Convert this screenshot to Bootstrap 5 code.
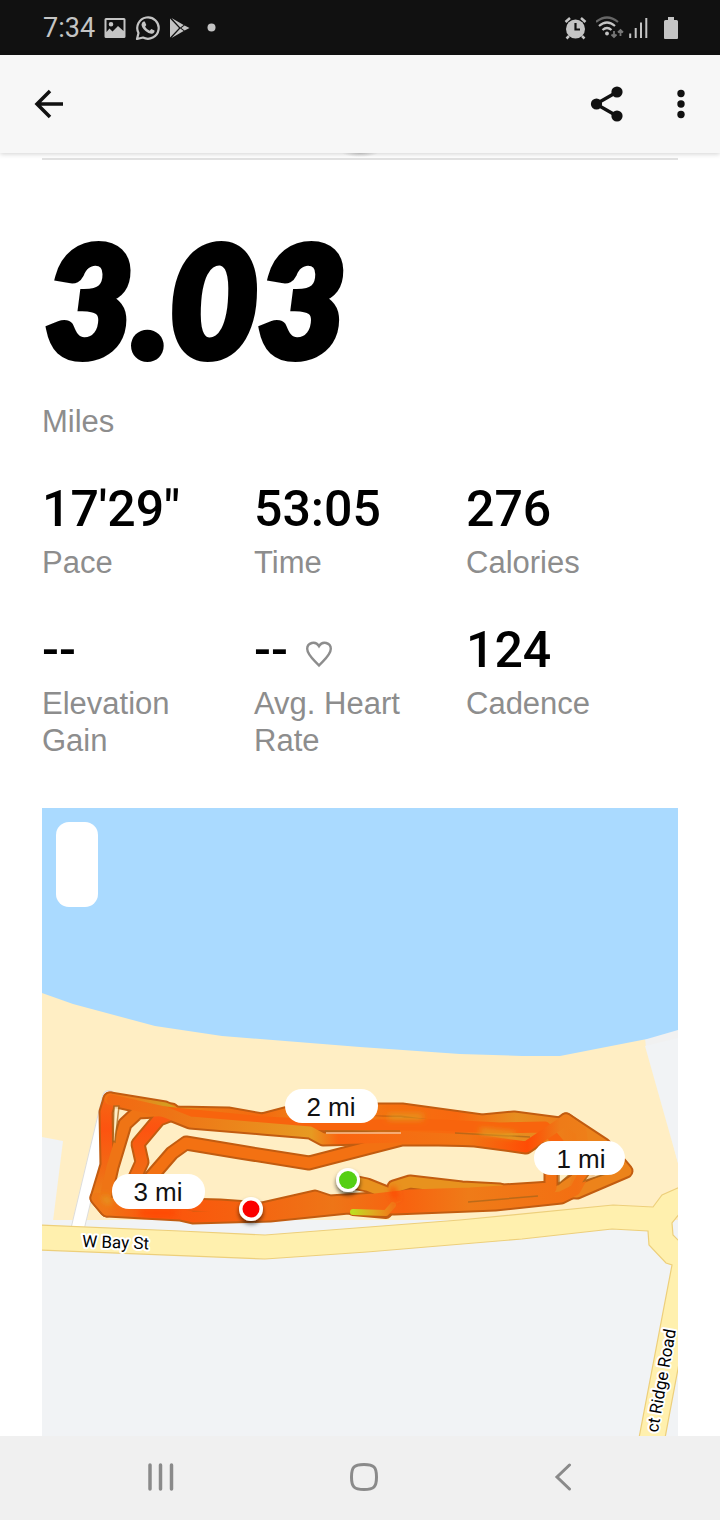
<!DOCTYPE html>
<html lang="en">
<head>
<meta charset="utf-8">
<meta name="viewport" content="width=device-width, initial-scale=1">
<title>Run details</title>
<link href="https://cdn.jsdelivr.net/npm/bootstrap@5.3.0/dist/css/bootstrap.min.css" rel="stylesheet">
<style>
  body { font-family: "Liberation Sans", Arial, sans-serif; background: #fff; color: #000; }
  svg { display: block; flex: none; }
  .status-strip { height: 55px; padding: 0 42px 0 43px; background: #111; color: #c4c4c4; font: 400 27px/32px Roboto, sans-serif; }
  .status-left { gap: 9px; }
  .app-bar { height: 98px; padding: 0 26px; background: #f7f7f7; box-shadow: 0 1px 5px rgba(0,0,0,.18); z-index: 2; }
  .app-actions { gap: 36px; }
  .icon-btn { padding: 8px; border: 0; background: none; color: #111; fill: #111; }
  .gutter { padding-left: 42px; padding-right: 42px; }
  .peek { height: 7px; border-bottom: 2px solid #e1e1e1; background: radial-gradient(18px 4px at 50% 0, #ccc, transparent); }
  .distance { margin: 58px 0 0; padding-left: 3px; font: italic 900 152px/160px Lato, sans-serif; -webkit-text-stroke: 8px #000; }
  .stat-label { margin: 0; color: #8d8d8d; font-size: 31px; line-height: 37px; font-weight: 400; }
  .distance-label { margin-top: 25px; }
  .stats { display: grid; grid-template-columns: repeat(3, 1fr); row-gap: 39px; margin-top: 39px; }
  .stat-value { margin: 0; height: 60px; font: 500 50px/60px Roboto, sans-serif; gap: 17px; }
  .stats .stat-label { margin-top: 5px; }
  .narrow { max-width: 170px; }
  .route-map { margin-top: 49px; }
  .route-map svg { width: 100%; height: auto; }
  .pill { font: 400 26px "Liberation Sans", Arial, sans-serif; fill: #111; }
  .road { font: 400 17px Roboto, sans-serif; fill: #000; stroke: #fff; stroke-width: 4px; stroke-linejoin: round; paint-order: stroke; }
  .system-nav { height: 84px; background: #f0f0f0; padding: 0 60px 2px; }
  .system-nav .icon-btn { color: #8a8a8a; }
</style>
</head>
<body>
<div class="d-flex flex-column min-vh-100">

  <div class="status-strip d-flex align-items-center justify-content-between">
    <div class="status-left d-flex align-items-center">
      <span>7:34</span>
      <svg width="22" height="22" viewBox="0 0 22 22"><path fill="currentColor" fill-rule="evenodd" d="M2 1h18q1.500 0 1.500 1.500v17q0 1.500-1.500 1.500H2Q.5 21 .5 19.500v-17Q.5 1 2 1zm.5 2v12l3-3.500 3 3 5.500-5.500 5.500 5V3zM7 5a2.300 2.300 0 1 1 0 4.600A2.300 2.300 0 0 1 7 5z"/></svg>
      <svg width="25" height="26" viewBox="0 0 25 26"><path fill="none" stroke="currentColor" stroke-width="2.200" stroke-linejoin="round" d="M2 24l1.500-6A10.700 10.700 0 1 1 8 22.500z"/><path fill="currentColor" d="M8.500 6.500h1.300l1.500 3.500-1.200 1.700q1.700 2.900 4.600 4l1.600-1.800 3.200 1.600q.3 2.500-2.300 3.200-3 .6-6.700-2.600Q6.300 12 6.500 9.200 7 7.200 8.500 6.500z"/></svg>
      <svg width="21" height="22" viewBox="0 0 21 22"><path fill="currentColor" d="M1 1.500l9 9.500-9 9.500zM2.500 1L14.700 8l-3.400 2.600zM2.500 21L14.700 14l-3.400-2.600zM12.300 11l3.300-2.500L20.500 11l-4.900 2.500z"/></svg>
      <svg class="ms-2" width="9" height="9" viewBox="0 0 9 9"><circle cx="4.500" cy="4.500" r="4" fill="currentColor"/></svg>
    </div>
    <div class="d-flex align-items-center">
      <svg width="24" height="24" viewBox="0 0 24 24"><circle cx="11.500" cy="13" r="9.500" fill="currentColor"/><path d="M1.500 6l4.500-4M21.500 6L17 2M5 20l-2.500 2.500M18 20l2.500 2.500" stroke="currentColor" stroke-width="2.500"/><path d="M11.500 7v6.500h4.500" fill="none" stroke="#111" stroke-width="2.200"/></svg>
      <svg class="ms-2" width="29" height="24" viewBox="0 0 29 24"><g fill="none" stroke="currentColor" stroke-width="2.200"><path stroke="#666" d="M0 6q11-9 22 0"/><path d="M3 10q8-7 16 0M6.500 14q4.500-4 9 0"/></g><circle cx="11" cy="17.500" r="1.900" fill="currentColor"/><path fill="none" stroke="#777" stroke-width="1.800" d="M18 15v6m-2.500-2.500L18 21l2.500-2.500M24.500 20v-6M22 16.500l2.500-2.500 2.500 2.500"/></svg>
      <svg class="ms-1" width="19" height="22" viewBox="0 0 19 22"><path d="M1.200 16.500v4.500M6.700 11v10M12 5.500V21M17.300 1v20" stroke="currentColor" stroke-width="2"/></svg>
      <svg class="ms-3" width="14" height="24" viewBox="0 0 14 24"><path fill="currentColor" d="M4 1h6v3h2.500Q14 4 14 5.500V22q0 1-1 1H1q-1 0-1-1V5.500Q0 4 1.500 4H4z"/></svg>
    </div>
  </div>

  <header class="app-bar position-relative d-flex align-items-center justify-content-between">
    <button class="icon-btn" type="button" aria-label="Back"><svg width="30" height="30" viewBox="0 0 30 30"><path d="M16 2L3 15l13 13M3 15h26" fill="none" stroke="currentColor" stroke-width="3.500"/></svg></button>
    <div class="app-actions d-flex">
      <button class="icon-btn" type="button" aria-label="Share"><svg width="34" height="36" viewBox="0 0 34 36"><path d="M27 6L6 18l21 12" fill="none" stroke="currentColor" stroke-width="3.400"/><circle cx="27" cy="6" r="5.600"/><circle cx="6.500" cy="18" r="5.600"/><circle cx="27" cy="30" r="5.600"/></svg></button>
      <button class="icon-btn" type="button" aria-label="More options"><svg width="10" height="36" viewBox="0 0 10 36"><circle cx="5" cy="7.500" r="3.700"/><circle cx="5" cy="18" r="3.700"/><circle cx="5" cy="28.500" r="3.700"/></svg></button>
    </div>
  </header>

  <main class="gutter flex-grow-1">
    <div class="peek"></div>
    <h1 class="distance">3.03</h1>
    <p class="stat-label distance-label">Miles</p>

    <section class="stats">
      <div><p class="stat-value">17'29"</p><p class="stat-label">Pace</p></div>
      <div><p class="stat-value">53:05</p><p class="stat-label">Time</p></div>
      <div><p class="stat-value">276</p><p class="stat-label">Calories</p></div>
      <div><p class="stat-value">--</p><p class="stat-label narrow">Elevation Gain</p></div>
      <div><p class="stat-value d-flex align-items-center">--<svg width="28" height="28" viewBox="0 0 28 28" class="mt-2"><path d="M14 25.500C9 20 2.200 15 2.200 8.800c0-6 8.300-8.500 11.800-2.600 3.500-5.900 11.800-3.400 11.800 2.600C25.800 15 19 20 14 25.500z" fill="none" stroke="#8d8d8d" stroke-width="2.400"/></svg></p><p class="stat-label narrow">Avg. Heart Rate</p></div>
      <div><p class="stat-value">124</p><p class="stat-label">Cadence</p></div>
    </section>

    <section class="route-map">
      <svg viewBox="42 808 636 628" role="img" aria-label="Route map">
        <defs>
          <linearGradient id="heatA" gradientUnits="userSpaceOnUse" x1="90" y1="0" x2="630" y2="0">
            <stop offset="0" stop-color="#f76a0b"/><stop offset=".08" stop-color="#ed7f1b"/><stop offset=".15" stop-color="#d2a020"/><stop offset=".21" stop-color="#ee7915"/><stop offset=".32" stop-color="#f5690e"/><stop offset=".44" stop-color="#e6921f"/><stop offset=".55" stop-color="#f5700f"/><stop offset=".68" stop-color="#f8680f"/><stop offset=".79" stop-color="#e68e20"/><stop offset=".88" stop-color="#ee7c18"/><stop offset="1" stop-color="#f57510"/>
          </linearGradient>
          <linearGradient id="heatB" gradientUnits="userSpaceOnUse" x1="90" y1="0" x2="630" y2="0">
            <stop offset="0" stop-color="#f46610"/><stop offset=".15" stop-color="#ee7416"/><stop offset=".3" stop-color="#eb8a1c"/><stop offset=".41" stop-color="#e69a22"/><stop offset=".46" stop-color="#f96510"/><stop offset=".7" stop-color="#f17614"/><stop offset=".81" stop-color="#ff4c05"/><stop offset=".87" stop-color="#ee7b18"/><stop offset="1" stop-color="#ee841a"/>
          </linearGradient>
          <linearGradient id="heatC" gradientUnits="userSpaceOnUse" x1="90" y1="0" x2="630" y2="0">
            <stop offset="0" stop-color="#ee7817"/><stop offset=".03" stop-color="#f07617"/><stop offset=".12" stop-color="#fd520a"/><stop offset=".28" stop-color="#f56210"/><stop offset=".45" stop-color="#ee7517"/><stop offset=".58" stop-color="#f8620f"/><stop offset=".7" stop-color="#ef7b18"/><stop offset=".9" stop-color="#f36f12"/><stop offset="1" stop-color="#ee811b"/>
          </linearGradient>
          <linearGradient id="heatV" gradientUnits="userSpaceOnUse" x1="0" y1="1092" x2="0" y2="1215">
            <stop offset="0" stop-color="#f26a14"/><stop offset=".3" stop-color="#fd5310"/><stop offset=".65" stop-color="#f16c15"/><stop offset=".85" stop-color="#ec8119"/><stop offset="1" stop-color="#f26a12"/>
          </linearGradient>
          <linearGradient id="lime"><stop offset="0" stop-color="#bfdc20"/><stop offset=".5" stop-color="#e0a91f"/><stop offset="1" stop-color="#f17616"/></linearGradient>
          <filter id="drop" x="-50%" y="-50%" width="200%" height="200%"><feDropShadow dx="0" dy="3" stdDeviation="2" flood-opacity=".6"/></filter>
          <filter id="soft" filterUnits="userSpaceOnUse" x="90" y="1090" width="540" height="130"><feGaussianBlur stdDeviation="3"/></filter>
          <!-- laps of the run, drawn once as casing and once as colour -->
          <path id="lap1" d="M110 1099L165 1108 176 1113 228 1114 262 1120 300 1110 402 1110 482 1121 514 1118 560 1124"/>
          <path id="lap2" d="M112 1100L165 1112 190 1122 262 1128 310 1132 323 1139 402 1137 475 1140 526 1147 566 1120 581 1131 584 1155 574 1190"/>
          <path id="lap3" d="M165 1112L262 1122 330 1125 440 1125 500 1128 545 1127 560 1145"/>
          <path id="lap4" d="M146 1183L172 1153 186 1143 240 1152 309 1163 402 1139 480 1139"/>
          <path id="side1" d="M110 1099L106 1112 107 1165 97 1198 107 1210"/>
          <path id="side2" d="M172 1110L138 1112 125 1124 112 1167 105 1198"/>
          <path id="side3" d="M172 1114L159 1119 138 1144 142 1162 133 1182"/>
          <path id="low1" d="M97 1198L107 1210 180 1214 193 1217 270 1215 348 1207 394 1208 495 1204 561 1197 575 1190 585 1172"/>
          <path id="low2" d="M105 1203L220 1206 262 1209 315 1197 330 1202 375 1199 410 1195 470 1193 551 1188 551 1162"/>
          <path id="low3" d="M348 1181L367 1185 397 1197M397 1197L394 1187 410 1182 462 1188 500 1190"/>
          <path id="east" d="M566 1120L604 1145 626 1171 577 1192 559 1191 590 1170"/>
        </defs>

        <rect x="42" y="808" width="636" height="628" fill="#f1f3f5"/>
        <path fill="#ffeec4" d="M42 980L645 1030 678 1163V1220H42z"/>
        <path fill="#f1f1f1" d="M644 1030h34v9l-32 8z"/><path fill="#f1f3f5" d="M645 1046l33-8v125z"/>
        <path fill="#aadaff" d="M42 808H678V1030L647 1039 560 1056H522L460 1054 360 1047 222 1036 155 1026 73 1004 42 993z"/>
        <path fill="#f1f3f5" d="M42 1137l21 4-11 88H42z"/>
        <path d="M109 1097L78 1227" stroke="#ddd" stroke-width="14" stroke-linecap="round"/>
        <path d="M109 1097L78 1227" stroke="#fff" stroke-width="12" stroke-linecap="round"/>
        <path fill="#fff0ae" stroke="#edcf7b" stroke-width="1.200" d="M40 1225L180 1231 265 1235 460 1220 613 1205 653 1207 662 1195 680 1187V1213L672 1223 673 1235 680 1242V1358L665 1438H639L672 1265 666 1263 649 1245 648 1231 612 1229 522 1239 367 1252 265 1259 40 1250z"/>

        <g fill="none" stroke="#c25c10" stroke-width="15" stroke-linejoin="round" stroke-linecap="round">
          <use href="#lap4"/><use href="#lap1"/><use href="#lap2"/><use href="#lap3"/><use href="#side1"/><use href="#side2"/><use href="#side3"/><use href="#low3"/><use href="#low1"/><use href="#low2"/><use href="#east"/>
          <path d="M353 1210L386 1213 393 1205" stroke-width="12"/>
        </g>
        <g fill="none" stroke-width="11" stroke-linejoin="round" stroke-linecap="round">
          <use href="#lap4" stroke="#f37112"/><use href="#side1" stroke="url(#heatV)"/><use href="#side3" stroke="url(#heatV)"/><use href="#side2" stroke="#ef7415"/>
          <path d="M180 1113L262 1120 300 1112 482 1122 560 1122 585 1131 600 1144 540 1142 480 1139 323 1128 262 1128 190 1122z" fill="url(#heatA)"/>
          <path d="M270 1208L315 1199 395 1198 550 1190 575 1188 561 1196 495 1202 394 1206 300 1212z" fill="url(#heatC)"/>
          <use href="#lap1" stroke="url(#heatA)"/><use href="#lap3" stroke="#f8640d"/><use href="#east" stroke="#ec831b"/><use href="#lap2" stroke="url(#heatB)"/>
          <use href="#low3" stroke="#e8921e"/><use href="#low1" stroke="url(#heatC)"/><use href="#low2" stroke="url(#heatC)"/>
          <path d="M353 1212L386 1213 393 1205" stroke="url(#lime)" stroke-width="6"/>
        </g>
        <g fill="none" stroke="#a9661a" stroke-width="1.500" opacity=".75">
          <path d="M114 1106h5l-4 36-2-1z" fill="#ffeec4"/>
          <path d="M325 1131L400 1131M455 1133l75 4M468 1202l70-6"/>
          <path d="M559 1184v-11h12zM584 1181l5-7 20-1z" fill="#ffeec4"/>
        </g>
        <path d="M326 1133h75" stroke="#f6c193" stroke-width="1.500"/>
        <g filter="url(#soft)" fill="none" stroke="#e0a021" stroke-width="5">
          <path d="M103 1197l8 6M388 1117h35M480 1131l35 4"/>
          <path d="M140 1213h35M392 1187l4 12" stroke="#ff4405"/>
        </g>

        <rect x="56" y="822" width="42" height="85" rx="13" fill="#fff"/>
        <g fill="#fff"><rect x="285" y="1089" width="93" height="34" rx="17"/><rect x="534" y="1141" width="91" height="34" rx="17"/><rect x="112" y="1174" width="93" height="35" rx="17"/></g>
        <g class="pill" text-anchor="middle"><text x="331" y="1116">2 mi</text><text x="581" y="1168">1 mi</text><text x="158" y="1201">3 mi</text></g>
        <g filter="url(#drop)"><circle cx="348" cy="1180" r="12" fill="#fff"/><circle cx="251" cy="1209" r="12" fill="#fff"/></g>
        <circle cx="348" cy="1180" r="9" fill="#55cf14"/><circle cx="251" cy="1209" r="8.500" fill="#fb0000"/>
        <text class="road" transform="translate(82 1247) rotate(2)">W Bay St</text>
        <text class="road" transform="translate(676 1330) rotate(-80)" text-anchor="end">ct Ridge Road</text>
      </svg>
    </section>
  </main>

  <nav class="system-nav d-flex align-items-center justify-content-around" aria-label="System">
    <button class="icon-btn" type="button" aria-label="Recent apps"><svg width="26" height="28" viewBox="0 0 26 28"><path d="M2 2v24M12.500 2v24M23.500 2v24" stroke="currentColor" stroke-width="3.500" stroke-linecap="round"/></svg></button>
    <button class="icon-btn" type="button" aria-label="Home"><svg width="30" height="30" viewBox="0 0 30 30"><path d="M15 2.500c10 0 12.500 2.500 12.500 12.500S25 27.500 15 27.500 2.500 25 2.500 15 5 2.500 15 2.500z" fill="none" stroke="currentColor" stroke-width="3"/></svg></button>
    <button class="icon-btn" type="button" aria-label="Back"><svg width="18" height="28" viewBox="0 0 18 28"><path d="M15.500 2L3 14l12.500 12" fill="none" stroke="currentColor" stroke-width="3" stroke-linecap="round"/></svg></button>
  </nav>
</div>
<script src="https://cdn.jsdelivr.net/npm/bootstrap@5.3.0/dist/js/bootstrap.bundle.min.js"></script>
</body>
</html>
